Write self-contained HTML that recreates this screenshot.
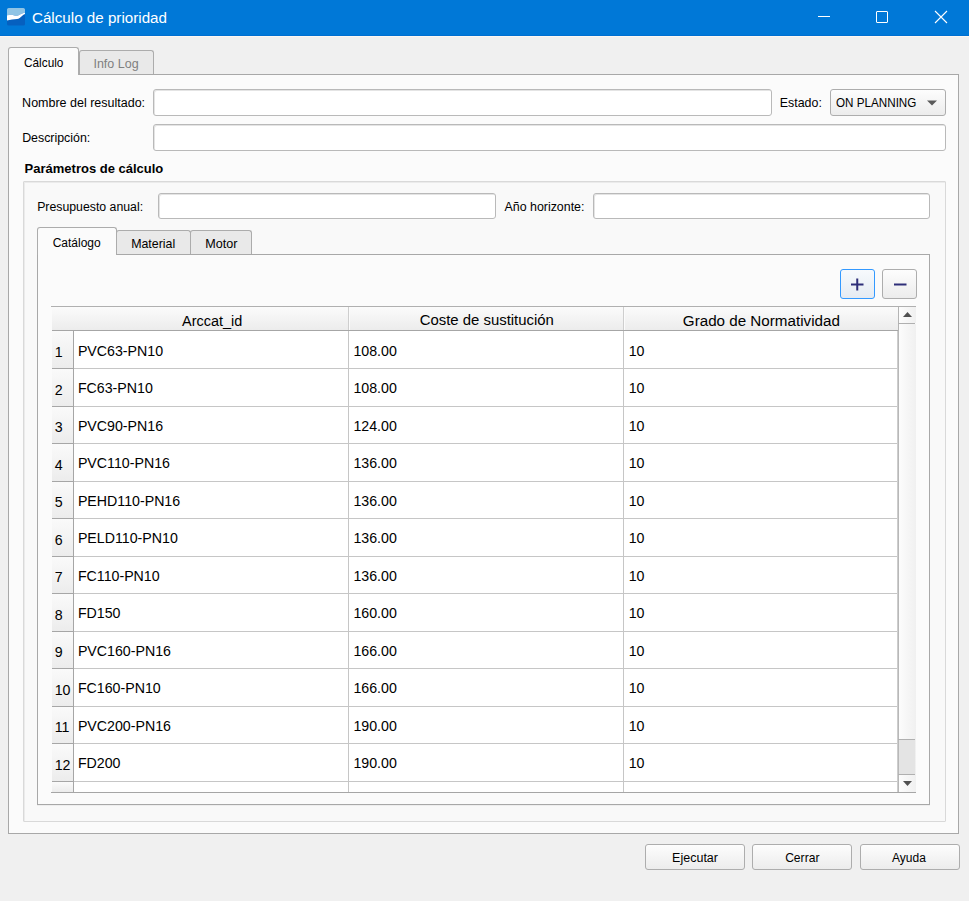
<!DOCTYPE html>
<html><head><meta charset="utf-8">
<style>
*{box-sizing:border-box;margin:0;padding:0}
html,body{width:969px;height:901px;overflow:hidden;background:#f0f0f0;font-family:"Liberation Sans",sans-serif;color:#000}
.a{position:absolute}
.t{position:absolute;white-space:nowrap;line-height:1}
.inp{position:absolute;background:#fff;border:1px solid #b9b9b9;border-radius:3px;box-shadow:inset 1px 1px 0 #e4e4e4}
.btn{position:absolute;border:1px solid #adadad;border-radius:3px;background:linear-gradient(#fdfdfd,#ececec)}
.tab{position:absolute;border:1px solid #acacac;border-bottom:none;border-radius:3px 3px 0 0}
.pane{position:absolute;border:1px solid #a8a8a8;background:#fbfbfb}
</style></head>
<body>
<div class="a" style="left:0px;top:0px;width:969px;height:36px;background:#0078d7"></div>
<div class="a" style="left:0px;top:35px;width:969px;height:1px;background:#006fd1"></div>
<div class="a" style="left:0px;top:36px;width:969px;height:1px;background:#fcf7f2"></div>
<svg class="a" style="left:7px;top:8px" width="18" height="18" viewBox="0 0 18 18">
  <rect x="0" y="0" width="18" height="17.6" rx="1.6" fill="#0660bf"/>
  <path d="M0 1.6 Q0 0 1.6 0 H16.4 Q18 0 18 1.6 V4.8 C16 5.2 14.2 5.6 13 6.6 C11.5 7.8 9.8 8.1 8.5 7.9 C7 7.6 6 6.7 4.5 6.8 C3 6.9 1.5 7.2 0 7.3 Z" fill="#8fc4e5"/>
  <path d="M0 7.3 C1.5 7.2 3 6.9 4.5 6.8 C6 6.7 7 7.6 8.5 7.9 C9.8 8.1 11.5 7.8 13 6.6 C14.2 5.6 16 5.2 18 4.8 V6.1 C17 6.5 16 7 15 8 C13.5 9.5 12 10.8 10 11 C7 11.2 3 11.8 0 12.6 Z" fill="#ffffff"/>
</svg>
<div class="t" style="left:31.94px;top:10.43px;font-size:15.2px;color:#fff;">Cálculo de prioridad</div>
<div class="a" style="left:818px;top:16px;width:12px;height:1px;background:#fff"></div>
<div class="a" style="left:876px;top:11px;width:12px;height:12px;border:1px solid #fff;border-radius:1px"></div>
<svg class="a" style="left:934px;top:10px" width="14" height="14" viewBox="0 0 14 14"><path d="M1 1 L13 13 M13 1 L1 13" stroke="#fff" stroke-width="1.1"/></svg>
<div class="pane" style="left:8px;top:74px;width:951px;height:760px"></div>
<div class="tab" style="left:79px;top:50px;width:75px;height:24px;background:#e9e9e9"></div>
<div class="tab" style="left:8px;top:47px;width:71px;height:28px;background:#fbfbfb"></div>
<div class="t" style="left:23.77px;top:57.47px;font-size:12.2px;color:#000;transform:scaleX(0.970);transform-origin:0 0;">Cálculo</div>
<div class="t" style="left:93.42px;top:57.82px;font-size:12.5px;color:#808080;">Info Log</div>
<div class="t" style="left:22.12px;top:97.42px;font-size:12.5px;color:#000;">Nombre del resultado:</div>
<div class="inp" style="left:153px;top:89px;width:619px;height:27px"></div>
<div class="t" style="left:779.83px;top:97.20px;font-size:12.4px;color:#000;">Estado:</div>
<div class="btn" style="left:830px;top:89px;width:116px;height:27px"></div>
<div class="t" style="left:835.68px;top:97.37px;font-size:12.2px;color:#000;transform:scaleX(0.957);transform-origin:0 0;">ON PLANNING</div>
<svg class="a" style="left:927px;top:100px" width="10" height="6" viewBox="0 0 10 6"><path d="M0 0.5 H10 L5 5.5 Z" fill="#5a5a5a"/></svg>
<div class="t" style="left:22.13px;top:131.50px;font-size:12.4px;color:#000;">Descripción:</div>
<div class="inp" style="left:153px;top:124px;width:793px;height:27px"></div>
<div class="t" style="left:24.59px;top:161.50px;font-size:13px;color:#000;font-weight:bold;">Parámetros de cálculo</div>
<div class="a" style="left:23px;top:181px;width:923px;height:641px;border:1px solid #d9d9d9;border-radius:1px;background:#f9f9f9;box-shadow:inset 1px 1px 0 #ebebeb"></div>
<div class="t" style="left:37.14px;top:200.59px;font-size:12.3px;color:#000;">Presupuesto anual:</div>
<div class="inp" style="left:158px;top:193px;width:338px;height:26px"></div>
<div class="t" style="left:504.53px;top:200.50px;font-size:12.4px;color:#000;">Año horizonte:</div>
<div class="inp" style="left:593px;top:193px;width:337px;height:26px"></div>
<div class="pane" style="left:37px;top:254px;width:893px;height:551px;box-shadow:0 1px 0 #eeeeee"></div>
<div class="tab" style="left:116px;top:230px;width:75px;height:24px;background:#e9e9e9"></div>
<div class="tab" style="left:190px;top:230px;width:62px;height:24px;background:#e9e9e9"></div>
<div class="tab" style="left:37px;top:227px;width:80px;height:28px;background:#fbfbfb"></div>
<div class="t" style="left:52.66px;top:236.84px;font-size:12px;color:#000;">Catálogo</div>
<div class="t" style="left:131.13px;top:238.10px;font-size:12.4px;color:#000;">Material</div>
<div class="t" style="left:205.32px;top:237.93px;font-size:12.6px;color:#000;">Motor</div>
<div class="btn" style="left:840px;top:269px;width:35px;height:30px;border-color:#3399ff;background:linear-gradient(#f7fafd,#e5ebf2)"></div>
<svg class="a" style="left:840px;top:269px" width="35" height="30"><path d="M11 15.5 H23.5 M17.25 9.5 V21.5" stroke="#2e2e78" stroke-width="2"/></svg>
<div class="btn" style="left:882px;top:269px;width:35px;height:30px"></div>
<svg class="a" style="left:882px;top:269px" width="35" height="30"><path d="M12 15.5 H24.5" stroke="#2e2e78" stroke-width="2"/></svg>
<div class="a" style="left:51px;top:306px;width:865px;height:1px;background:#b0b0b0"></div>
<div class="a" style="left:52px;top:307px;width:846px;height:23px;background:linear-gradient(#fbfbfb,#ececec)"></div>
<div class="a" style="left:52px;top:330px;width:846px;height:1px;background:#a6a6a6"></div>
<div class="a" style="left:52px;top:331px;width:845px;height:461px;background:#fff"></div>
<div class="a" style="left:348px;top:307px;width:1px;height:23px;background:#cecece"></div>
<div class="a" style="left:349px;top:307px;width:1px;height:23px;background:#fbfbfb"></div>
<div class="a" style="left:623px;top:307px;width:1px;height:23px;background:#cecece"></div>
<div class="a" style="left:624px;top:307px;width:1px;height:23px;background:#fbfbfb"></div>
<div class="a" style="left:898px;top:307px;width:1px;height:24px;background:#b4b4b4"></div>
<div class="t" style="left:182.09px;top:313.78px;font-size:14.44px;color:#000;">Arccat_id</div>
<div class="t" style="left:419.66px;top:313.37px;font-size:14.92px;color:#000;">Coste de sustitución</div>
<div class="t" style="left:682.84px;top:313.13px;font-size:15.2px;color:#000;">Grado de Normatividad</div>
<div class="a" style="left:52px;top:331px;width:21px;height:461px;background:#f7f7f7"></div>
<div class="a" style="left:52px;top:331px;width:21px;height:37px;background:linear-gradient(#fafafa,#ececec)"></div>
<div class="a" style="left:52px;top:369px;width:21px;height:37px;background:linear-gradient(#fafafa,#ececec)"></div>
<div class="a" style="left:52px;top:407px;width:21px;height:36px;background:linear-gradient(#fafafa,#ececec)"></div>
<div class="a" style="left:52px;top:444px;width:21px;height:37px;background:linear-gradient(#fafafa,#ececec)"></div>
<div class="a" style="left:52px;top:482px;width:21px;height:36px;background:linear-gradient(#fafafa,#ececec)"></div>
<div class="a" style="left:52px;top:519px;width:21px;height:37px;background:linear-gradient(#fafafa,#ececec)"></div>
<div class="a" style="left:52px;top:557px;width:21px;height:36px;background:linear-gradient(#fafafa,#ececec)"></div>
<div class="a" style="left:52px;top:594px;width:21px;height:37px;background:linear-gradient(#fafafa,#ececec)"></div>
<div class="a" style="left:52px;top:632px;width:21px;height:36px;background:linear-gradient(#fafafa,#ececec)"></div>
<div class="a" style="left:52px;top:669px;width:21px;height:37px;background:linear-gradient(#fafafa,#ececec)"></div>
<div class="a" style="left:52px;top:707px;width:21px;height:36px;background:linear-gradient(#fafafa,#ececec)"></div>
<div class="a" style="left:52px;top:744px;width:21px;height:37px;background:linear-gradient(#fafafa,#ececec)"></div>
<div class="a" style="left:52px;top:782px;width:21px;height:10px;background:linear-gradient(#fafafa,#ececec)"></div>
<div class="a" style="left:73px;top:331px;width:1px;height:461px;background:#a6a6a6"></div>
<div class="a" style="left:52px;top:368px;width:21px;height:1px;background:#a6a6a6"></div>
<div class="a" style="left:74px;top:368px;width:823px;height:1px;background:#c6c6c6"></div>
<div class="a" style="left:52px;top:406px;width:21px;height:1px;background:#a6a6a6"></div>
<div class="a" style="left:74px;top:406px;width:823px;height:1px;background:#c6c6c6"></div>
<div class="a" style="left:52px;top:443px;width:21px;height:1px;background:#a6a6a6"></div>
<div class="a" style="left:74px;top:443px;width:823px;height:1px;background:#c6c6c6"></div>
<div class="a" style="left:52px;top:481px;width:21px;height:1px;background:#a6a6a6"></div>
<div class="a" style="left:74px;top:481px;width:823px;height:1px;background:#c6c6c6"></div>
<div class="a" style="left:52px;top:518px;width:21px;height:1px;background:#a6a6a6"></div>
<div class="a" style="left:74px;top:518px;width:823px;height:1px;background:#c6c6c6"></div>
<div class="a" style="left:52px;top:556px;width:21px;height:1px;background:#a6a6a6"></div>
<div class="a" style="left:74px;top:556px;width:823px;height:1px;background:#c6c6c6"></div>
<div class="a" style="left:52px;top:593px;width:21px;height:1px;background:#a6a6a6"></div>
<div class="a" style="left:74px;top:593px;width:823px;height:1px;background:#c6c6c6"></div>
<div class="a" style="left:52px;top:631px;width:21px;height:1px;background:#a6a6a6"></div>
<div class="a" style="left:74px;top:631px;width:823px;height:1px;background:#c6c6c6"></div>
<div class="a" style="left:52px;top:668px;width:21px;height:1px;background:#a6a6a6"></div>
<div class="a" style="left:74px;top:668px;width:823px;height:1px;background:#c6c6c6"></div>
<div class="a" style="left:52px;top:706px;width:21px;height:1px;background:#a6a6a6"></div>
<div class="a" style="left:74px;top:706px;width:823px;height:1px;background:#c6c6c6"></div>
<div class="a" style="left:52px;top:743px;width:21px;height:1px;background:#a6a6a6"></div>
<div class="a" style="left:74px;top:743px;width:823px;height:1px;background:#c6c6c6"></div>
<div class="a" style="left:52px;top:781px;width:21px;height:1px;background:#a6a6a6"></div>
<div class="a" style="left:74px;top:781px;width:823px;height:1px;background:#c6c6c6"></div>
<div class="a" style="left:348px;top:331px;width:1px;height:461px;background:#c6c6c6"></div>
<div class="a" style="left:623px;top:331px;width:1px;height:461px;background:#c6c6c6"></div>
<div class="a" style="left:897px;top:331px;width:1px;height:461px;background:#cdcdcd"></div>
<div class="a" style="left:898px;top:331px;width:1px;height:461px;background:#b8b8b8"></div>
<div class="t" style="left:54.71px;top:344.68px;font-size:14.2px;color:#000;">1</div>
<div class="t" style="left:77.91px;top:343.68px;font-size:14.2px;color:#000;">PVC63-PN10</div>
<div class="t" style="left:353.41px;top:343.68px;font-size:14.2px;color:#000;">108.00</div>
<div class="t" style="left:628.71px;top:343.68px;font-size:14.2px;color:#000;">10</div>
<div class="t" style="left:54.71px;top:382.68px;font-size:14.2px;color:#000;">2</div>
<div class="t" style="left:77.91px;top:380.68px;font-size:14.2px;color:#000;">FC63-PN10</div>
<div class="t" style="left:353.41px;top:380.68px;font-size:14.2px;color:#000;">108.00</div>
<div class="t" style="left:628.71px;top:380.68px;font-size:14.2px;color:#000;">10</div>
<div class="t" style="left:54.71px;top:419.68px;font-size:14.2px;color:#000;">3</div>
<div class="t" style="left:77.91px;top:418.68px;font-size:14.2px;color:#000;">PVC90-PN16</div>
<div class="t" style="left:353.41px;top:418.68px;font-size:14.2px;color:#000;">124.00</div>
<div class="t" style="left:628.71px;top:418.68px;font-size:14.2px;color:#000;">10</div>
<div class="t" style="left:54.71px;top:457.68px;font-size:14.2px;color:#000;">4</div>
<div class="t" style="left:77.91px;top:455.68px;font-size:14.2px;color:#000;">PVC110-PN16</div>
<div class="t" style="left:353.41px;top:455.68px;font-size:14.2px;color:#000;">136.00</div>
<div class="t" style="left:628.71px;top:455.68px;font-size:14.2px;color:#000;">10</div>
<div class="t" style="left:54.71px;top:494.68px;font-size:14.2px;color:#000;">5</div>
<div class="t" style="left:77.91px;top:493.68px;font-size:14.2px;color:#000;">PEHD110-PN16</div>
<div class="t" style="left:353.41px;top:493.68px;font-size:14.2px;color:#000;">136.00</div>
<div class="t" style="left:628.71px;top:493.68px;font-size:14.2px;color:#000;">10</div>
<div class="t" style="left:54.71px;top:532.68px;font-size:14.2px;color:#000;">6</div>
<div class="t" style="left:77.91px;top:530.68px;font-size:14.2px;color:#000;">PELD110-PN10</div>
<div class="t" style="left:353.41px;top:530.68px;font-size:14.2px;color:#000;">136.00</div>
<div class="t" style="left:628.71px;top:530.68px;font-size:14.2px;color:#000;">10</div>
<div class="t" style="left:54.71px;top:569.68px;font-size:14.2px;color:#000;">7</div>
<div class="t" style="left:77.91px;top:568.68px;font-size:14.2px;color:#000;">FC110-PN10</div>
<div class="t" style="left:353.41px;top:568.68px;font-size:14.2px;color:#000;">136.00</div>
<div class="t" style="left:628.71px;top:568.68px;font-size:14.2px;color:#000;">10</div>
<div class="t" style="left:54.71px;top:607.68px;font-size:14.2px;color:#000;">8</div>
<div class="t" style="left:77.91px;top:605.68px;font-size:14.2px;color:#000;">FD150</div>
<div class="t" style="left:353.41px;top:605.68px;font-size:14.2px;color:#000;">160.00</div>
<div class="t" style="left:628.71px;top:605.68px;font-size:14.2px;color:#000;">10</div>
<div class="t" style="left:54.71px;top:644.68px;font-size:14.2px;color:#000;">9</div>
<div class="t" style="left:77.91px;top:643.68px;font-size:14.2px;color:#000;">PVC160-PN16</div>
<div class="t" style="left:353.41px;top:643.68px;font-size:14.2px;color:#000;">166.00</div>
<div class="t" style="left:628.71px;top:643.68px;font-size:14.2px;color:#000;">10</div>
<div class="t" style="left:54.71px;top:682.68px;font-size:14.2px;color:#000;">10</div>
<div class="t" style="left:77.91px;top:680.68px;font-size:14.2px;color:#000;">FC160-PN10</div>
<div class="t" style="left:353.41px;top:680.68px;font-size:14.2px;color:#000;">166.00</div>
<div class="t" style="left:628.71px;top:680.68px;font-size:14.2px;color:#000;">10</div>
<div class="t" style="left:54.71px;top:719.68px;font-size:14.2px;color:#000;">11</div>
<div class="t" style="left:77.91px;top:718.68px;font-size:14.2px;color:#000;">PVC200-PN16</div>
<div class="t" style="left:353.41px;top:718.68px;font-size:14.2px;color:#000;">190.00</div>
<div class="t" style="left:628.71px;top:718.68px;font-size:14.2px;color:#000;">10</div>
<div class="t" style="left:54.71px;top:757.68px;font-size:14.2px;color:#000;">12</div>
<div class="t" style="left:77.91px;top:755.68px;font-size:14.2px;color:#000;">FD200</div>
<div class="t" style="left:353.41px;top:755.68px;font-size:14.2px;color:#000;">190.00</div>
<div class="t" style="left:628.71px;top:755.68px;font-size:14.2px;color:#000;">10</div>
<div class="a" style="left:51px;top:792px;width:865px;height:1px;background:#a6a6a6"></div>
<div class="a" style="left:899px;top:324px;width:17px;height:468px;background:linear-gradient(90deg,#fcfcfc,#f0f0f0)"></div>
<div class="a" style="left:899px;top:307px;width:17px;height:16px;background:linear-gradient(90deg,#fcfcfc,#f0f0f0)"></div>
<div class="a" style="left:898px;top:306px;width:18px;height:1px;background:#b0b0b0"></div>
<div class="a" style="left:898px;top:323px;width:17px;height:1px;background:#b0b0b0"></div>
<svg class="a" style="left:902px;top:311px" width="11" height="7" viewBox="0 0 11 7"><path d="M1 6 H10 L5.5 1 Z" fill="#505050"/></svg>
<div class="a" style="left:898px;top:739px;width:17px;height:1px;background:#b0b0b0"></div>
<div class="a" style="left:899px;top:740px;width:16px;height:34px;background:#e4e4e4"></div>
<div class="a" style="left:898px;top:774px;width:17px;height:1px;background:#b0b0b0"></div>
<svg class="a" style="left:902px;top:780px" width="11" height="7" viewBox="0 0 11 7"><path d="M1 1 H10 L5.5 6 Z" fill="#505050"/></svg>
<div class="a" style="left:898px;top:792px;width:18px;height:1px;background:#a6a6a6"></div>
<div class="btn" style="left:645px;top:844px;width:100px;height:26px"></div>
<div class="btn" style="left:752px;top:844px;width:100px;height:26px"></div>
<div class="btn" style="left:860px;top:844px;width:100px;height:26px"></div>
<div class="t" style="left:672.12px;top:852.42px;font-size:12.5px;color:#000;">Ejecutar</div>
<div class="t" style="left:785.15px;top:851.76px;font-size:12.1px;color:#000;">Cerrar</div>
<div class="t" style="left:892.06px;top:851.84px;font-size:12.0px;color:#000;">Ayuda</div>
</body></html>
